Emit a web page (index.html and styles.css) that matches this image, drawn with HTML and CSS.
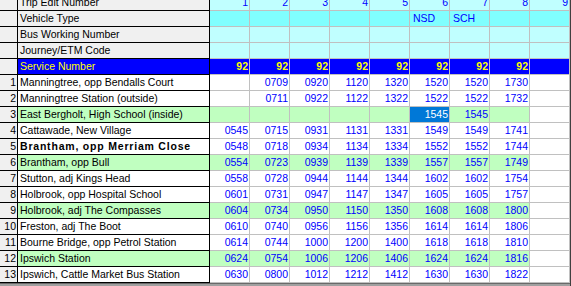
FILE: index.html
```html
<!DOCTYPE html>
<html>
<head>
<meta charset="utf-8">
<link rel="stylesheet" href="styles.css">
</head>
<body>
<div class="viewport">
<table class="grid">
<colgroup>
<col class="c-num"><col class="c-name">
<col class="c-d"><col class="c-d"><col class="c-d"><col class="c-d"><col class="c-d"><col class="c-d"><col class="c-d"><col class="c-d"><col class="c-d">
</colgroup>
<tbody>
<tr class="hdr">
<td class="rn"></td><td class="nm">Trip Edit Number</td>
<td class="d">1</td><td class="d">2</td><td class="d">3</td><td class="d">4</td><td class="d">5</td><td class="d">6</td><td class="d">7</td><td class="d">8</td><td class="d">9</td>
</tr>
<tr class="hdr veh">
<td class="rn"></td><td class="nm">Vehicle Type</td>
<td class="d"></td><td class="d"></td><td class="d"></td><td class="d"></td><td class="d"></td><td class="d l">NSD</td><td class="d l">SCH</td><td class="d"></td><td class="d"></td>
</tr>
<tr class="hdr">
<td class="rn"></td><td class="nm">Bus Working Number</td>
<td class="d"></td><td class="d"></td><td class="d"></td><td class="d"></td><td class="d"></td><td class="d"></td><td class="d"></td><td class="d"></td><td class="d"></td>
</tr>
<tr class="hdr">
<td class="rn"></td><td class="nm">Journey/ETM Code</td>
<td class="d"></td><td class="d"></td><td class="d"></td><td class="d"></td><td class="d"></td><td class="d"></td><td class="d"></td><td class="d"></td><td class="d"></td>
</tr>
<tr class="svc">
<td class="rn"></td><td class="nm">Service Number</td>
<td class="d">92</td><td class="d">92</td><td class="d">92</td><td class="d">92</td><td class="d">92</td><td class="d">92</td><td class="d">92</td><td class="d">92</td><td class="d"></td>
</tr>
<tr>
<td class="rn">1</td><td class="nm">Manningtree, opp Bendalls Court</td>
<td class="d"></td><td class="d">0709</td><td class="d">0920</td><td class="d">1120</td><td class="d">1320</td><td class="d">1520</td><td class="d">1520</td><td class="d">1730</td><td class="d e"></td>
</tr>
<tr>
<td class="rn">2</td><td class="nm">Manningtree Station (outside)</td>
<td class="d"></td><td class="d">0711</td><td class="d">0922</td><td class="d">1122</td><td class="d">1322</td><td class="d">1522</td><td class="d">1522</td><td class="d">1732</td><td class="d e"></td>
</tr>
<tr class="green">
<td class="rn">3</td><td class="nm">East Bergholt, High School (inside)</td>
<td class="d"></td><td class="d"></td><td class="d"></td><td class="d"></td><td class="d"></td><td class="d sel">1545</td><td class="d">1545</td><td class="d"></td><td class="d e"></td>
</tr>
<tr>
<td class="rn">4</td><td class="nm">Cattawade, New Village</td>
<td class="d">0545</td><td class="d">0715</td><td class="d">0931</td><td class="d">1131</td><td class="d">1331</td><td class="d">1549</td><td class="d">1549</td><td class="d">1741</td><td class="d e"></td>
</tr>
<tr class="strong">
<td class="rn">5</td><td class="nm">Brantham, opp Merriam Close</td>
<td class="d">0548</td><td class="d">0718</td><td class="d">0934</td><td class="d">1134</td><td class="d">1334</td><td class="d">1552</td><td class="d">1552</td><td class="d">1744</td><td class="d e"></td>
</tr>
<tr class="green">
<td class="rn">6</td><td class="nm">Brantham, opp Bull</td>
<td class="d">0554</td><td class="d">0723</td><td class="d">0939</td><td class="d">1139</td><td class="d">1339</td><td class="d">1557</td><td class="d">1557</td><td class="d">1749</td><td class="d e"></td>
</tr>
<tr>
<td class="rn">7</td><td class="nm">Stutton, adj Kings Head</td>
<td class="d">0558</td><td class="d">0728</td><td class="d">0944</td><td class="d">1144</td><td class="d">1344</td><td class="d">1602</td><td class="d">1602</td><td class="d">1754</td><td class="d e"></td>
</tr>
<tr>
<td class="rn">8</td><td class="nm">Holbrook, opp Hospital School</td>
<td class="d">0601</td><td class="d">0731</td><td class="d">0947</td><td class="d">1147</td><td class="d">1347</td><td class="d">1605</td><td class="d">1605</td><td class="d">1757</td><td class="d e"></td>
</tr>
<tr class="green">
<td class="rn">9</td><td class="nm">Holbrook, adj The Compasses</td>
<td class="d">0604</td><td class="d">0734</td><td class="d">0950</td><td class="d">1150</td><td class="d">1350</td><td class="d">1608</td><td class="d">1608</td><td class="d">1800</td><td class="d e"></td>
</tr>
<tr>
<td class="rn">10</td><td class="nm">Freston, adj The Boot</td>
<td class="d">0610</td><td class="d">0740</td><td class="d">0956</td><td class="d">1156</td><td class="d">1356</td><td class="d">1614</td><td class="d">1614</td><td class="d">1806</td><td class="d e"></td>
</tr>
<tr>
<td class="rn">11</td><td class="nm">Bourne Bridge, opp Petrol Station</td>
<td class="d">0614</td><td class="d">0744</td><td class="d">1000</td><td class="d">1200</td><td class="d">1400</td><td class="d">1618</td><td class="d">1618</td><td class="d">1810</td><td class="d e"></td>
</tr>
<tr class="green">
<td class="rn">12</td><td class="nm">Ipswich Station</td>
<td class="d">0624</td><td class="d">0754</td><td class="d">1006</td><td class="d">1206</td><td class="d">1406</td><td class="d">1624</td><td class="d">1624</td><td class="d">1816</td><td class="d e"></td>
</tr>
<tr>
<td class="rn">13</td><td class="nm">Ipswich, Cattle Market Bus Station</td>
<td class="d">0630</td><td class="d">0800</td><td class="d">1012</td><td class="d">1212</td><td class="d">1412</td><td class="d">1630</td><td class="d">1630</td><td class="d">1822</td><td class="d e"></td>
</tr>
</tbody>
</table>
<div class="hscroll"></div>
</div>
</body>
</html>
```

FILE: styles.css
```css
html, body {
  margin: 0;
  padding: 0;
  background: #ffffff;
  overflow: hidden;
}

.viewport {
  width: 570px;
  height: 286px;
  overflow: hidden;
  border-right: 1px solid #404040;
  font-family: "Liberation Sans", Arial, sans-serif;
  font-size: 10.5px;
}

.grid {
  margin-top: -5px;
  border-collapse: separate;
  border-spacing: 0;
  table-layout: fixed;
  width: 570px;
}

.c-num { width: 18px; }
.c-name { width: 192px; }
.c-d { width: 40px; }

.grid td {
  height: 15px;
  padding: 0;
  line-height: 15px;
  white-space: nowrap;
  overflow: hidden;
  box-sizing: content-box;
  border-bottom: 1px solid #c0c0c0;
  border-right: 1px solid #c0c0c0;
  color: #0000ff;
  background: #ffffff;
}

.grid td.rn {
  background: #f0f0f0;
  color: #000000;
  text-align: right;
  padding-right: 1px;
  border-right: 1px solid #000000;
  border-bottom: 1px solid #000000;
}

.grid td.nm {
  color: #000000;
  padding-left: 2px;
  border-right: 1px solid #000000;
  border-bottom: 1px solid #000000;
}

.grid td.d {
  text-align: right;
  padding-right: 1px;
}

.grid td.d.l {
  text-align: left;
  padding-left: 3px;
  padding-right: 0;
}

.hdr td.nm { background: #f0f0f0; }
.hdr td.d { background: #c0ffff; }
.veh td.d { background: #80ffff; }

.svc td.nm {
  background: #0000ff;
  color: #ffff00;
}
.svc td.d {
  background: #0000ff;
  color: #ffff00;
  font-weight: bold;
}

.green td.nm,
.green td.d { background: #c0ffc0; }
.green td.d.e { background: #ffffff; }

.grid td.d.sel {
  background: #0078d7;
  color: #ffffff;
}

.strong td.nm {
  font-weight: bold;
  letter-spacing: 0.8px;
}

.hscroll {
  height: 4px;
  border-top: 1px solid #696969;
  background: #a0a0a0;
}
```
